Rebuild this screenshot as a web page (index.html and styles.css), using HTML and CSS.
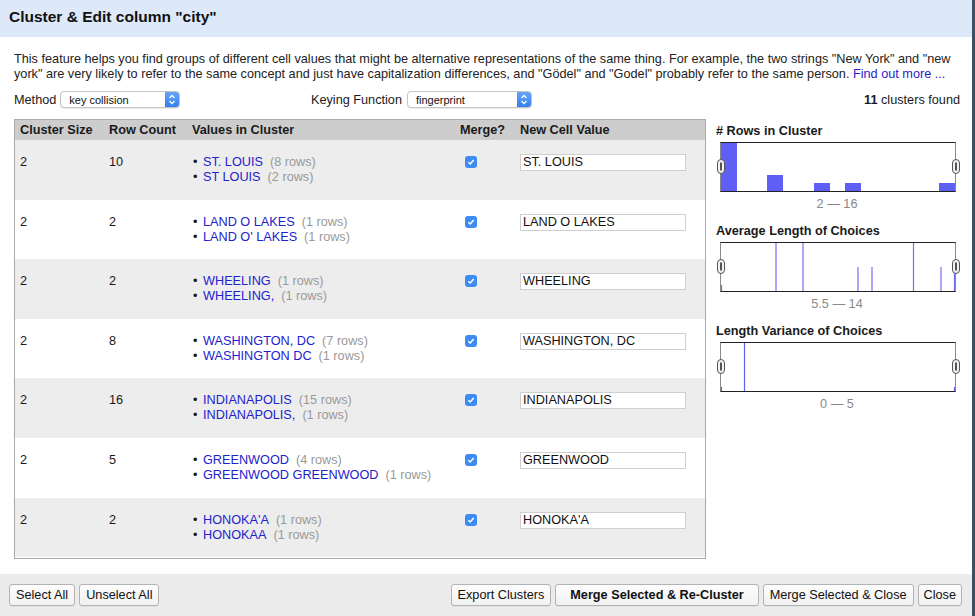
FILE: index.html
```html
<!DOCTYPE html>
<html>
<head>
<meta charset="utf-8">
<link rel="stylesheet" href="styles.css">
</head>
<body>
<div class="dialog">
  <div class="titlebar">Cluster &amp; Edit column "city"</div>
  <div class="content">
    <p class="desc">This feature helps you find groups of different cell values that might be alternative representations of the same thing. For example, the two strings "New York" and "new york" are very likely to refer to the same concept and just have capitalization differences, and "Gödel" and "Godel" probably refer to the same person. <span class="link">Find out more ...</span></p>
    <div class="controls">
      <div class="ctl ctl-method">
        <span class="ctl-label">Method</span>
        <div class="select sel-method"><span class="sel-text">key collision</span><span class="sel-arrows"><svg width="14" height="17" viewBox="0 0 14 17"><path d="M4.5 7 L7 4.5 L9.5 7 M4.5 10 L7 12.5 L9.5 10" fill="none" stroke="#fff" stroke-width="1.3"/></svg></span></div>
      </div>
      <div class="ctl ctl-key">
        <span class="ctl-label">Keying Function</span>
        <div class="select sel-key"><span class="sel-text">fingerprint</span><span class="sel-arrows"><svg width="14" height="17" viewBox="0 0 14 17"><path d="M4.5 7 L7 4.5 L9.5 7 M4.5 10 L7 12.5 L9.5 10" fill="none" stroke="#fff" stroke-width="1.3"/></svg></span></div>
      </div>
      <div class="found"><b>11</b> clusters found</div>
    </div>
    <div class="main">
      <div class="table">
        <div class="trow thead">
          <div>Cluster Size</div><div>Row Count</div><div>Values in Cluster</div><div>Merge?</div><div>New Cell Value</div>
        </div>
        <div class="trow alt">
          <div>2</div><div>10</div>
          <div class="vals"><div><span class="b">•</span><span class="v">ST. LOUIS</span><span class="c">(8 rows)</span></div><div><span class="b">•</span><span class="v">ST LOUIS</span><span class="c">(2 rows)</span></div></div>
          <div class="mcell"><span class="check"><svg width="12" height="12" viewBox="0 0 12 12"><path d="M3.3 6.2 L5.2 8 L8.7 3.9" fill="none" stroke="#fff" stroke-width="1.5"/></svg></span></div>
          <div><div class="input">ST. LOUIS</div></div>
        </div>
        <div class="trow">
          <div>2</div><div>2</div>
          <div class="vals"><div><span class="b">•</span><span class="v">LAND O LAKES</span><span class="c">(1 rows)</span></div><div><span class="b">•</span><span class="v">LAND O' LAKES</span><span class="c">(1 rows)</span></div></div>
          <div class="mcell"><span class="check"><svg width="12" height="12" viewBox="0 0 12 12"><path d="M3.3 6.2 L5.2 8 L8.7 3.9" fill="none" stroke="#fff" stroke-width="1.5"/></svg></span></div>
          <div><div class="input">LAND O LAKES</div></div>
        </div>
        <div class="trow alt">
          <div>2</div><div>2</div>
          <div class="vals"><div><span class="b">•</span><span class="v">WHEELING</span><span class="c">(1 rows)</span></div><div><span class="b">•</span><span class="v">WHEELING,</span><span class="c">(1 rows)</span></div></div>
          <div class="mcell"><span class="check"><svg width="12" height="12" viewBox="0 0 12 12"><path d="M3.3 6.2 L5.2 8 L8.7 3.9" fill="none" stroke="#fff" stroke-width="1.5"/></svg></span></div>
          <div><div class="input">WHEELING</div></div>
        </div>
        <div class="trow">
          <div>2</div><div>8</div>
          <div class="vals"><div><span class="b">•</span><span class="v">WASHINGTON, DC</span><span class="c">(7 rows)</span></div><div><span class="b">•</span><span class="v">WASHINGTON DC</span><span class="c">(1 rows)</span></div></div>
          <div class="mcell"><span class="check"><svg width="12" height="12" viewBox="0 0 12 12"><path d="M3.3 6.2 L5.2 8 L8.7 3.9" fill="none" stroke="#fff" stroke-width="1.5"/></svg></span></div>
          <div><div class="input">WASHINGTON, DC</div></div>
        </div>
        <div class="trow alt">
          <div>2</div><div>16</div>
          <div class="vals"><div><span class="b">•</span><span class="v">INDIANAPOLIS</span><span class="c">(15 rows)</span></div><div><span class="b">•</span><span class="v">INDIANAPOLIS,</span><span class="c">(1 rows)</span></div></div>
          <div class="mcell"><span class="check"><svg width="12" height="12" viewBox="0 0 12 12"><path d="M3.3 6.2 L5.2 8 L8.7 3.9" fill="none" stroke="#fff" stroke-width="1.5"/></svg></span></div>
          <div><div class="input">INDIANAPOLIS</div></div>
        </div>
        <div class="trow">
          <div>2</div><div>5</div>
          <div class="vals"><div><span class="b">•</span><span class="v">GREENWOOD</span><span class="c">(4 rows)</span></div><div><span class="b">•</span><span class="v">GREENWOOD GREENWOOD</span><span class="c">(1 rows)</span></div></div>
          <div class="mcell"><span class="check"><svg width="12" height="12" viewBox="0 0 12 12"><path d="M3.3 6.2 L5.2 8 L8.7 3.9" fill="none" stroke="#fff" stroke-width="1.5"/></svg></span></div>
          <div><div class="input">GREENWOOD</div></div>
        </div>
        <div class="trow alt">
          <div>2</div><div>2</div>
          <div class="vals"><div><span class="b">•</span><span class="v">HONOKA'A</span><span class="c">(1 rows)</span></div><div><span class="b">•</span><span class="v">HONOKAA</span><span class="c">(1 rows)</span></div></div>
          <div class="mcell"><span class="check"><svg width="12" height="12" viewBox="0 0 12 12"><path d="M3.3 6.2 L5.2 8 L8.7 3.9" fill="none" stroke="#fff" stroke-width="1.5"/></svg></span></div>
          <div><div class="input">HONOKA'A</div></div>
        </div>
      </div>
      <div class="facets">
        <div class="facet">
          <div class="facet-title"># Rows in Cluster</div>
          <div class="chart">
            <svg width="234" height="48" viewBox="0 0 234 48">
              <rect x="0" y="0" width="16" height="48" fill="#5f5ff5"/>
              <rect x="46" y="32" width="16" height="16" fill="#5f5ff5"/>
              <rect x="93" y="40" width="16" height="8" fill="#5f5ff5"/>
              <rect x="124" y="40" width="16" height="8" fill="#5f5ff5"/>
              <rect x="218" y="40" width="16" height="8" fill="#5f5ff5"/>
            </svg>
            <span class="handle handle-l"><svg width="8" height="15" viewBox="0 0 8 15"><rect x="0.5" y="0.5" width="7" height="14" rx="3.5" fill="#f2f2f2" stroke="#555"/><rect x="3" y="3.5" width="2" height="8" fill="#555"/></svg></span>
            <span class="handle handle-r"><svg width="8" height="15" viewBox="0 0 8 15"><rect x="0.5" y="0.5" width="7" height="14" rx="3.5" fill="#f2f2f2" stroke="#555"/><rect x="3" y="3.5" width="2" height="8" fill="#555"/></svg></span>
          </div>
          <div class="facet-range">2 — 16</div>
        </div>
        <div class="facet">
          <div class="facet-title">Average Length of Choices</div>
          <div class="chart">
            <svg width="234" height="48" viewBox="0 0 234 48">
              <g stroke="#7070f2" stroke-width="1.2">
                <line x1="0.5" y1="42" x2="0.5" y2="48"/>
                <line x1="55" y1="0" x2="55" y2="48"/>
                <line x1="82" y1="0" x2="82" y2="48"/>
                <line x1="137" y1="24" x2="137" y2="48"/>
                <line x1="151" y1="24" x2="151" y2="48"/>
                <line x1="192.5" y1="0" x2="192.5" y2="48"/>
                <line x1="220" y1="24" x2="220" y2="48"/>
                <line x1="233.5" y1="24" x2="233.5" y2="48"/>
              </g>
            </svg>
            <span class="handle handle-l"><svg width="8" height="15" viewBox="0 0 8 15"><rect x="0.5" y="0.5" width="7" height="14" rx="3.5" fill="#f2f2f2" stroke="#555"/><rect x="3" y="3.5" width="2" height="8" fill="#555"/></svg></span>
            <span class="handle handle-r"><svg width="8" height="15" viewBox="0 0 8 15"><rect x="0.5" y="0.5" width="7" height="14" rx="3.5" fill="#f2f2f2" stroke="#555"/><rect x="3" y="3.5" width="2" height="8" fill="#555"/></svg></span>
          </div>
          <div class="facet-range">5.5 — 14</div>
        </div>
        <div class="facet">
          <div class="facet-title">Length Variance of Choices</div>
          <div class="chart">
            <svg width="234" height="48" viewBox="0 0 234 48">
              <g stroke="#5f5ff5" stroke-width="1.2">
                <line x1="0.5" y1="44" x2="0.5" y2="48"/>
                <line x1="23.5" y1="0" x2="23.5" y2="48"/>
                <line x1="233.5" y1="44" x2="233.5" y2="48"/>
              </g>
            </svg>
            <span class="handle handle-l"><svg width="8" height="15" viewBox="0 0 8 15"><rect x="0.5" y="0.5" width="7" height="14" rx="3.5" fill="#f2f2f2" stroke="#555"/><rect x="3" y="3.5" width="2" height="8" fill="#555"/></svg></span>
            <span class="handle handle-r"><svg width="8" height="15" viewBox="0 0 8 15"><rect x="0.5" y="0.5" width="7" height="14" rx="3.5" fill="#f2f2f2" stroke="#555"/><rect x="3" y="3.5" width="2" height="8" fill="#555"/></svg></span>
          </div>
          <div class="facet-range">0 — 5</div>
        </div>
      </div>
    </div>
  </div>
  <div class="footer">
    <div class="btn-group">
      <button class="btn">Select All</button>
      <button class="btn">Unselect All</button>
    </div>
    <div class="btn-group">
      <button class="btn">Export Clusters</button>
      <button class="btn btn-strong">Merge Selected &amp; Re-Cluster</button>
      <button class="btn">Merge Selected &amp; Close</button>
      <button class="btn btn-close">Close</button>
    </div>
  </div>
</div>
</body>
</html>
```

FILE: styles.css
```css
* { box-sizing: border-box; }
html, body { margin: 0; padding: 0; }
body {
  font-family: "Liberation Sans", Arial, sans-serif;
  font-size: 12.7px;
  color: #1a1a1a;
  background: #fff;
}
.dialog {
  width: 975px;
  height: 616px;
  border-right: 3px solid #3b4f65;
  display: flex;
  flex-direction: column;
  background: #fff;
}
.titlebar {
  height: 37px;
  background: #dde8f9;
  padding: 8px 0 0 9px;
  font-weight: bold;
  font-size: 15.5px;
  line-height: 18px;
  color: #111;
}
.content {
  padding: 15px 14px 0 14px;
  flex: 1;
}
.desc {
  margin: 0;
  line-height: 15px;
  color: #222;
}
.link { color: #2a22cc; }
.controls {
  display: flex;
  align-items: center;
  height: 19px;
  margin-top: 8px;
}
.ctl { display: flex; align-items: center; }
.ctl-method { width: 297px; }
.ctl-label { margin-right: 5px; }
.ctl-method .ctl-label { margin-right: 4px; }
.select {
  height: 17px;
  border: 1px solid #c4c4c4;
  border-radius: 4px;
  display: flex;
  align-items: center;
  background: #fff;
  box-shadow: 0 1px 1px rgba(0,0,0,0.08);
  overflow: hidden;
}
.sel-method { width: 120px; }
.sel-key { width: 125px; }
.sel-text {
  flex: 1;
  font-size: 11px;
  padding-left: 8px;
  color: #111;
}
.sel-arrows {
  width: 14px;
  height: 17px;
  background: linear-gradient(#69a6f9, #2f7ef0);
  display: flex;
}
.found { margin-left: auto; margin-right: -2px; }
.main {
  display: flex;
  margin-top: 10px;
  height: 440px;
}
.table {
  width: 692px;
  height: 440px;
  border: 1px solid #a9a9a9;
  overflow: hidden;
  flex: none;
}
.trow {
  display: grid;
  grid-template-columns: 89px 83px 268px 60px 1fr;
  padding-left: 5px;
  height: 59.6px;
  padding-top: 15px;
  line-height: 15px;
}
.trow.alt { background: #ededed; }
.trow.thead {
  height: 20px;
  padding-top: 3px;
  background: #cdcdcd;
  font-weight: bold;
  color: #1a1a1a;
}
.vals .b { display: inline-block; width: 11px; padding-left: 1px; }
.v { color: #2222cc; }
.c { color: #999; margin-left: 7px; }
.mcell { padding-left: 5px; padding-top: 1px; }
.check {
  display: block;
  width: 12px;
  height: 12px;
  border-radius: 3px;
  background: #3d8cf4;
}
.check svg { display: block; }
.input {
  width: 166px;
  height: 17px;
  margin-top: -1px;
  border: 1px solid #cfcfcf;
  background: #fff;
  padding-left: 2px;
  line-height: 15px;
  color: #111;
}
.facets {
  margin-left: 10px;
  padding-top: 5px;
  width: 243px;
}
.facet { margin-bottom: 12px; }
.facet-title {
  font-weight: bold;
  line-height: 15px;
  margin-bottom: 3px;
}
.chart {
  position: relative;
  margin-left: 4px;
  width: 236px;
  height: 50px;
  border-top: 1px solid #222;
  border-bottom: 1px solid #222;
  border-left: 1px solid #888;
  border-right: 1px solid #888;
}
.chart > svg { display: block; }
.handle {
  position: absolute;
  top: 16px;
  width: 8px;
  height: 15px;
}
.handle svg { display: block; }
.handle-l { left: -4.5px; }
.handle-r { right: -4.5px; }
.facet-range {
  text-align: center;
  color: #888;
  line-height: 15px;
  margin-top: 5px;
}
.footer {
  height: 42px;
  background: #ececec;
  display: flex;
  justify-content: space-between;
  align-items: flex-start;
  padding: 10px 10px 0 9px;
}
.btn-group { display: flex; gap: 4px; }
.btn {
  font-family: "Liberation Sans", Arial, sans-serif;
  font-size: 12.7px;
  height: 22px;
  padding: 0 6px;
  border: 1px solid #b3b3b3;
  border-radius: 3px;
  background: linear-gradient(#fdfdfd, #f1f1f1);
  color: #111;
  box-shadow: 0 1px 0 rgba(0,0,0,0.05);
}
.btn-strong { font-weight: bold; padding: 0 14px; }
.btn-close { padding: 0 5px; }
```
